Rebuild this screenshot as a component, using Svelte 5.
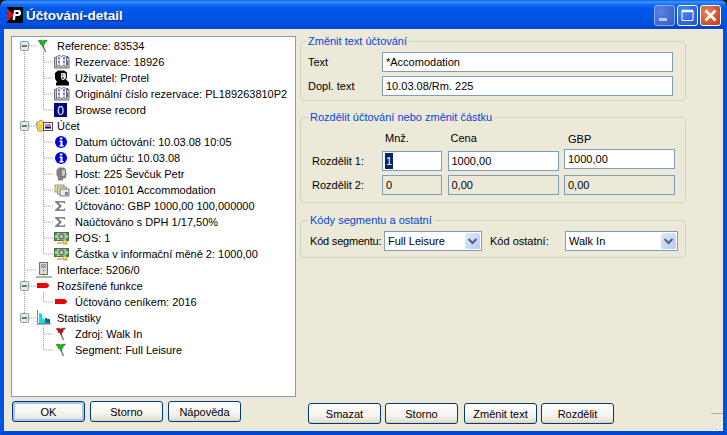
<script>
  const rows = [
    { t: 'Reference: 83534', i: 'flagG', p: 1 },
    { t: 'Rezervace: 18926', i: 'book', g: 1 },
    { t: 'Uživatel: Protel', i: 'user', g: 1 },
    { t: 'Originální číslo rezervace: PL189263810P2', i: 'book', g: 1 },
    { t: 'Browse record', i: 'zero', g: 1, last: 1 },
    { t: 'Účet', i: 'folder', p: 1 },
    { t: 'Datum účtování: 10.03.08 10:05', i: 'info', g: 1 },
    { t: 'Datum účtu: 10.03.08', i: 'info', g: 1 },
    { t: 'Host: 225 Ševčuk Petr', i: 'head', g: 1 },
    { t: 'Účet: 10101 Accommodation', i: 'cards', g: 1 },
    { t: 'Účtováno: GBP 1000,00 100,000000', i: 'sigma', g: 1 },
    { t: 'Naúčtováno s DPH 1/17,50%', i: 'sigma', g: 1 },
    { t: 'POS: 1', i: 'money', g: 1 },
    { t: 'Částka v informační měně 2: 1000,00', i: 'money', g: 1, last: 1 },
    { t: 'Interface: 5206/0', i: 'server', leaf: 1 },
    { t: 'Rozšířené funkce', i: 'tag', p: 1 },
    { t: 'Účtováno ceníkem: 2016', i: 'tag', g: 1, last: 1 },
    { t: 'Statistiky', i: 'chart', p: 1, end: 1 },
    { t: 'Zdroj: Walk In', i: 'flagR', g: 1, noroot: 1 },
    { t: 'Segment: Full Leisure', i: 'flagG', g: 1, last: 1, noroot: 1 }
  ];
</script>

{#snippet flag(color)}
  <path d="M7 8l2.500 6" stroke="#808080" stroke-width="1.600" />
  <path d="M2 3l3 -1 1 1 5 -1v1l-2 1v2l-1.500 1v2H7L6 7 4 6V4z" fill={color} stroke="#404040" stroke-width=".6" />
{/snippet}

{#snippet icon(k)}
  {#if k === 'flagG'}
    {@render flag('#00d000')}
  {:else if k === 'flagR'}
    {@render flag('#e00000')}
  {:else if k === 'book'}
    <path d="M0.500 3.500h14.500v10.500H0.500z" fill="#c8c8c8" stroke="#707070" />
    <path d="M2.500 2.500l3-1 2 1 2-1 3 1v10l-3-1-2 1-2-1-3 1z" fill="#fff" stroke="#707070" />
    <path d="M4 4h2M4.500 6h1M4 8h2M4.500 10h1M9 4h2M9.500 6h1M9 8h2M9.500 10h1" stroke="#0000d0" />
    <path d="M13.500 2v2" stroke="#e00000" /><path d="M13.500 4v3" stroke="#e0d000" /><path d="M13.500 7v4" stroke="#00a000" />
  {:else if k === 'user'}
    <path d="M4 0.500h6l3 2v5l-1 2 1 1 2 2v3H2v-2l1-2-1-1-1-2V3z" fill="#000" />
    <path d="M7 3h4l1 2v3l-2 2H8L7 8z" fill="#d8d8d8" />
    <path d="M8 5h1M8 8h2M5 12h4" stroke="#000" />
  {:else if k === 'zero'}
    <rect x="0" y="1" width="13" height="14" fill="#000080" />
    <text x="6.500" y="12.500" class="zero" text-anchor="middle">0</text>
  {:else if k === 'folder'}
    <path d="M0 5l5-3 3 2v9H2z" fill="#f4e060" stroke="#808080" stroke-width=".8" />
    <path d="M1 6h3M2 8h4M3 10h3" stroke="#c0a000" stroke-dasharray="1 1" />
    <rect x="7.500" y="4.500" width="9" height="8" fill="#fff" stroke="#505050" />
    <path d="M9 7h6" stroke="#c00000" /><path d="M9 9.500h6" stroke="#000090" stroke-width="2" />
  {:else if k === 'info'}
    <circle cx="7" cy="8" r="6" fill="#0000e0" />
    <path d="M6 3.500h2.400v2H6zM5.500 6.500h3V11h1v1.500h-4V11h1V8h-1z" fill="#fff" />
  {:else if k === 'head'}
    <path d="M5 1.500h5l2 2v3l1 2-1 1v2.500l-3 .5v2H4v-3L2.500 9V4z" fill="#808080" />
    <path d="M8 4h3v4l-1 2H8z" fill="#c8c8c8" />
  {:else if k === 'cards'}
    <rect x="1" y="3" width="9" height="7" fill="#f0e8a0" stroke="#808080" stroke-width=".8" />
    <rect x="3.500" y="5" width="9" height="7" fill="#f0e8a0" stroke="#808080" stroke-width=".8" />
    <rect x="6" y="7" width="9" height="7" fill="#e8e8e8" stroke="#606060" stroke-width=".8" />
    <path d="M11 10h3v3h-3z" fill="#808080" />
  {:else if k === 'sigma'}
    <path d="M1 3h10v2.500h-1L9.500 4.500H4.500l3.500 3.500-3.500 3.500h5l.5-1h1V13H1v-1l4-4-4-4z" fill="#808080" />
  {:else if k === 'money'}
    <rect x="0.500" y="2.500" width="14" height="8" fill="#b0c8a8" stroke="#606060" />
    <path d="M1 3h2v2H1zM12 3h2v2h-2zM1 8h2v2H1zM12 8h2v2h-2z" fill="#00c000" />
    <circle cx="7.500" cy="6.500" r="2.500" fill="none" stroke="#707070" stroke-width="1.300" />
    <path d="M9 10h4v4H9z" fill="#f0e040" stroke="#707070" stroke-width=".6" />
    <path d="M3 13h5" stroke="#c8b800" stroke-width="1.500" />
  {:else if k === 'server'}
    <rect x="3.500" y="0.500" width="8" height="12" fill="#d8d8d8" stroke="#707070" />
    <path d="M5 3h5M5 5h5" stroke="#707070" />
    <rect x="7" y="8" width="1" height="1" fill="#e00000" />
    <path d="M0 15h16" stroke="#606060" /><rect x="6.500" y="13" width="2" height="2" fill="#e0d000" />
  {:else if k === 'tag'}
    <path d="M1 5h10l2 2v1l-2 2H1z" fill="#f00000" />
  {:else if k === 'chart'}
    <path d="M1.500 0v13.500H15" fill="none" stroke="#808080" />
    <path d="M0 14.500h14" stroke="#b0b0b0" />
    <path d="M3 13V3l3 1v4l3 2v3z" fill="#00e0f0" />
    <path d="M9 13v-5h2v1h3v4z" fill="#007080" />
  {/if}
{/snippet}

<div class="window">
  <header class="titlebar">
    <svg class="logo" width="16" height="16" viewBox="0 0 16 16">
      <rect width="16" height="16" fill="#000" />
      <path d="M0 1l7 7-7 7z" fill="#e01010" />
      <path d="M7 3h5.500L14 4.500v3L12 9H8.500L8 13H5.500z" fill="#fff" />
      <path d="M8.800 5h2.500v2H8.500z" fill="#000" />
    </svg>
    <span class="title">Účtování-detail</span>
    <div class="caption">
      <div class="cbtn min"><svg width="21" height="21" viewBox="0 0 21 21"><rect x="5" y="13" width="8" height="3" fill="#b8c8f0" /></svg></div>
      <div class="cbtn"><svg width="21" height="21" viewBox="0 0 21 21"><path d="M5 5.500h11v10H5z" fill="none" stroke="#fff" /><path d="M5 6h11" stroke="#fff" stroke-width="2.500" /></svg></div>
      <div class="cbtn close"><svg width="21" height="21" viewBox="0 0 21 21"><path d="M5.500 5.500l10 10M15.500 5.500l-10 10" stroke="#fff" stroke-width="2.600" /></svg></div>
    </div>
  </header>

  <div class="client">
    <section class="left">
      <div class="tree">
        {#each rows as r, n}
          <div class="row">
            <svg class="gut" class:child={r.g} width={r.g ? 63 : 45} height="16" viewBox="0 0 {r.g ? 63 : 45} 16">
              {#if !r.noroot}
                <path d="M12.500 {n === 0 ? 8 : 0}V{r.end ? 8 : 16}" class="dot" />
              {/if}
              {#if r.g}
                <path d="M31.500 0V{r.last ? 8 : 16}M32 8H42" class="dot" />
              {:else}
                <path d="M13 8H24" class="dot" />
              {/if}
              {#if r.p}
                <path d="M31.500 14V16" class="dot" />
                <rect x="8.500" y="3.500" width="8" height="9" rx="1" class="exp" />
                <path d="M10 8h5" stroke="#000" />
              {/if}
              <g transform="translate({r.g ? 42 : 24} 0)">{@render icon(r.i)}</g>
            </svg>
            <span>{r.t}</span>
          </div>
        {/each}
      </div>
      <div class="buttons lb">
        <button class="default">OK</button>
        <button>Storno</button>
        <button>Nápověda</button>
      </div>
    </section>

    <section class="right">
      <fieldset class="g1">
        <legend>Změnit text účtování</legend>
        <div class="textgrid">
          <label for="t1">Text</label><input id="t1" value="*Accomodation" readonly />
          <label for="t2">Dopl. text</label><input id="t2" value="10.03.08/Rm. 225" readonly />
        </div>
      </fieldset>

      <fieldset class="g2">
        <legend>Rozdělit účtování nebo změnit částku</legend>
        <div class="split">
          <span></span><span class="h">Mnž.</span><span class="h">Cena</span><span class="h gbp">GBP</span>
          <span class="lab">Rozdělit 1:</span>
          <div class="field"><span class="sel">1</span></div>
          <input value="1000,00" readonly />
          <input class="up" value="1000,00" readonly />
          <span class="lab">Rozdělit 2:</span>
          <input class="off" value="0" readonly />
          <input class="off" value="0,00" readonly />
          <input class="off" value="0,00" readonly />
        </div>
      </fieldset>

      <fieldset class="g3">
        <legend>Kódy segmentu a ostatní</legend>
        <div class="codes">
          <span class="k1">Kód segmentu:</span>
          <div class="combo c1"><span>Full Leisure</span><i><svg width="17" height="16" viewBox="0 0 17 16"><path d="M4.500 6l4 4 4-4" fill="none" stroke="#4d6185" stroke-width="2" /></svg></i></div>
          <span class="k2">Kód ostatní:</span>
          <div class="combo c2"><span>Walk In</span><i><svg width="17" height="16" viewBox="0 0 17 16"><path d="M4.500 6l4 4 4-4" fill="none" stroke="#4d6185" stroke-width="2" /></svg></i></div>
        </div>
      </fieldset>

      <div class="buttons rb">
        <button>Smazat</button>
        <button>Storno</button>
        <button class="gapl">Změnit text</button>
        <button>Rozdělit</button>
      </div>
    </section>
    <svg class="grip" width="12" height="18" viewBox="0 0 12 18">
      <rect width="12" height="1" fill="#b0ae9e" />
      <path d="M9 8h2v2H9zM5 12h2v2H5zM9 12h2v2H9zM1 16h2v2H1zM5 16h2v2H5zM9 16h2v2H9z" fill="#fff" />
      <path d="M9 8h1v1H9zM5 12h1v1H5zM9 12h1v1H9zM1 16h1v1H1zM5 16h1v1H5zM9 16h1v1H9z" fill="#c0bdaa" />
    </svg>
  </div>
</div>

<style>
  :global(body) { margin: 0; background: #1a1a1a; }
  .window {
    width: 727px; height: 435px; display: flex; flex-direction: column;
    font: 11px "Liberation Sans", Arial, sans-serif; color: #000;
    border-radius: 7px 7px 0 0; overflow: hidden;
  }
  .titlebar {
    height: 29px; flex: none; display: flex; align-items: center; padding: 0 6px 0 7px;
    background: linear-gradient(#0a5ce8 0, #3d95ff 2px, #1a70f4 4px, #0058ea 8px, #0055e5 16px, #0050e0 24px, #0046d5 27px, #0046d0 29px);
  }
  .logo { flex: none; margin-top: 1px; }
  .title { margin: 1px 0 0 3px; color: #fff; font: bold 13.500px "Liberation Sans", Arial, sans-serif; text-shadow: 1px 1px 0 #0a2f90; }
  .caption { margin-left: auto; display: flex; gap: 2px; margin-top: 2px; }
  .cbtn {
    width: 21px; height: 21px; box-sizing: border-box; border: 1px solid #fff; border-radius: 3px;
    background: radial-gradient(circle at 30% 30%, #4a86f0, #1f50d8); position: relative;
  }
  .cbtn svg { position: absolute; left: -1px; top: -1px; }
  .cbtn.min { border-color: #8fb0f0; background: radial-gradient(circle at 30% 30%, #5a86e0, #3458c8); }
  .cbtn.close { background: radial-gradient(circle at 30% 30%, #e8805a, #c8380e); }

  .client {
    flex: 1; min-height: 0; display: flex; background: #ece9d8; position: relative;
    border: 4px solid #0052e0; border-top: 0; border-bottom-color: #0046d5;
    padding: 0 0 7px 7px;
  }
  .left { width: 285px; flex: none; display: flex; flex-direction: column; padding-top: 7px; }
  .tree {
    height: 361px; box-sizing: border-box; background: #fff; border: 1px solid #7f9db9; padding-top: 1px;
    overflow: hidden;
  }
  .row { height: 16px; display: flex; align-items: center; white-space: nowrap; }
  .row span { margin-bottom: 1px; }
  .gut { flex: none; overflow: visible; }
  .dot { stroke: #a0a0a0; stroke-dasharray: 1 1; fill: none; }
  .exp { fill: #ece9d8; stroke: #7f9db9; }
  .zero { font: 12px "Liberation Sans", Arial, sans-serif; fill: #fff; }

  .buttons { display: flex; }
  .lb { gap: 5px; margin-top: 4px; padding-left: 1px; }
  .rb { gap: 4px; margin-top: auto; padding-left: 8px; }
  .gapl { margin-left: 2px; }
  button {
    width: 73px; height: 21px; padding: 0; box-sizing: border-box; font: inherit; color: #000;
    border: 1px solid #003c74; border-radius: 3px;
    background: linear-gradient(#fff, #f4f3ee 60%, #e6e3d8 90%, #d6d0c5);
  }
  button.default { box-shadow: inset 0 0 0 2px #a9c4ec; }

  .right { flex: 1; min-width: 0; display: flex; flex-direction: column; margin-left: 4px; padding-top: 5px; }
  fieldset {
    margin: 0; padding: 0; width: 386px; box-sizing: border-box;
    border: 1px solid #d0d0bf; border-radius: 4px;
  }
  legend { color: #0046d5; padding: 0 2px; margin-left: 5px; line-height: 14px; }
  .g2 legend, .g3 legend { margin-left: 7px; }
  .g1 { height: 67px; }
  .g2 { height: 93px; margin-top: 9px; }
  .g3 { height: 45px; margin-top: 10px; }

  input, .field {
    box-sizing: border-box; height: 20px; width: 100%; margin: 0; padding: 0 3px;
    border: 1px solid #7f9db9; background: #fff; font: inherit; color: #000; outline: 0; border-radius: 0;
    display: block;
  }
  input.off { background: #ece9d8; }
  .field { line-height: 18px; padding-left: 2px; }
  .sel { display: inline-block; background: #0a246a; color: #fff; padding: 0 1px; line-height: 16px; }
  .textgrid {
    display: grid; grid-template-columns: 74px 291px; row-gap: 4px; padding: 4px 0 0 7px; align-items: center;
  }
  .split {
    display: grid; grid-template-columns: 74.500px 60px 111px 111px; column-gap: 5.500px; row-gap: 4px;
    grid-template-rows: 18px 20px 20px; align-items: center; padding: 5px 0 0 0;
    margin-left: 1px;
  }
  .split > :nth-child(4n+1) { padding-left: 10px; white-space: nowrap; }
  .h { padding-left: 3px; align-self: center; }
  .gbp { position: relative; top: 1px; left: 1px; }
  .up { position: relative; top: -2px; }
  .codes { display: flex; align-items: center; padding: 4px 0 0 9px; }
  .k1 { width: 74px; white-space: nowrap; letter-spacing: -.2px; }
  .k2 { width: 75px; margin-left: 8px; white-space: nowrap; }
  .combo {
    box-sizing: border-box; height: 20px; border: 1px solid #7f9db9; background: #fff;
    display: flex; align-items: center; justify-content: space-between; padding-left: 3px;
  }
  .c1 { width: 98px; }
  .c2 { width: 113px; }
  .combo i {
    width: 15px; height: 16px; margin-right: 1px; border-radius: 2px; overflow: hidden; display: block;
    background: linear-gradient(135deg, #e2ebfd, #b6c8f4);
  }
  .combo i svg { display: block; margin-left: -1px; }
  .grip { position: absolute; right: 0; bottom: 0; }
</style>
